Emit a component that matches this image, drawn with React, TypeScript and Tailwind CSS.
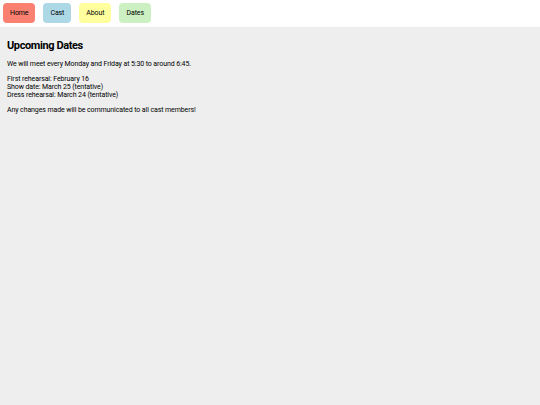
import React from 'react';

const links = [
  { label: 'Home', color: 'bg-[#fa8072]' },
  { label: 'Cast', color: 'bg-[#add8e6]' },
  { label: 'About', color: 'bg-[#ffff9e]' },
  { label: 'Dates', color: 'bg-[#ccf0c2]' },
];

const App: React.FC = () => {
  return (
    <div className="min-h-[405px] bg-[#eeeeee] font-['Roboto',sans-serif] text-black">
      {/* Nav */}
      <nav className="flex gap-[8px] bg-white p-[3px] pb-[4px]">
        {links.map((l) => (
          <button
            key={l.label}
            className={`${l.color} h-[20px] rounded-[4px] px-[7px] text-[7px] leading-none tracking-[-0.1px]`}
          >
            {l.label}
          </button>
        ))}
      </nav>

      <main className="px-[7px] pt-[12px]">
        <h1 className="text-[11px] font-bold leading-[14px] tracking-[-0.4px]">Upcoming Dates</h1>
        <div className="text-[7px] leading-[8px] tracking-[-0.1px]">
          <p className="mt-[7px]">
            We will meet every Monday and Friday at 5:30 to around 6:45.
          </p>
          <p className="mt-[7px]">
            First rehearsal: February 16
            <br />
            Show date: March 25 (tentative)
            <br />
            Dress rehearsal: March 24 (tentative)
          </p>
          <p className="mt-[7px]">
            Any changes made will be communicated to all cast members!
          </p>
        </div>
      </main>
    </div>
  );
};

export default App;
